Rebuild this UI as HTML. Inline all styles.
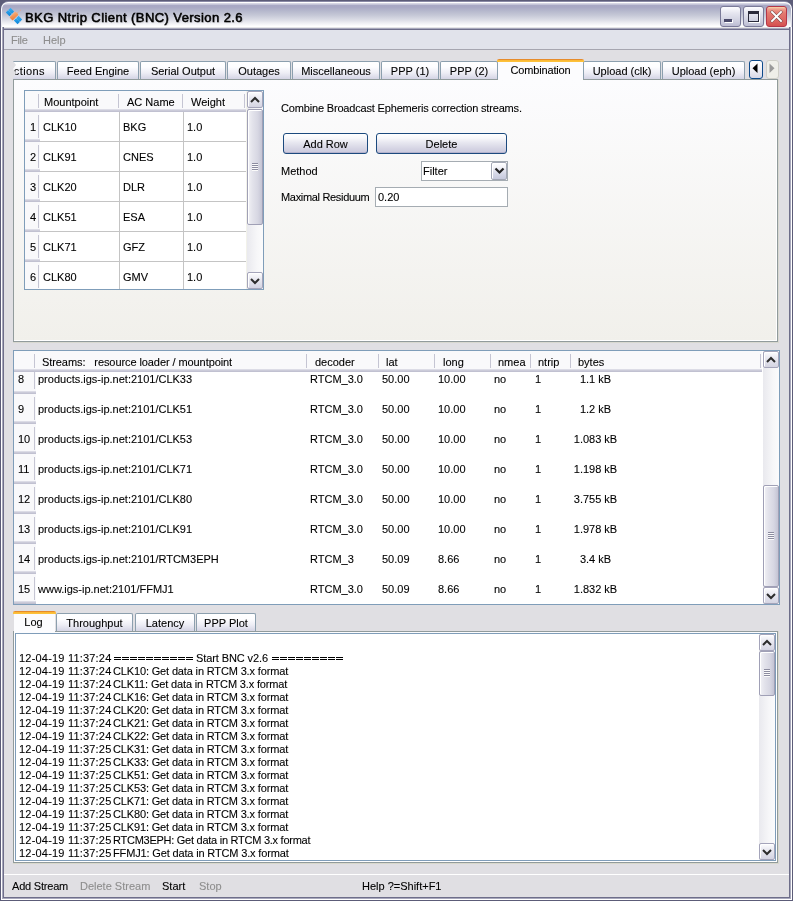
<!DOCTYPE html><html><head><meta charset="utf-8"><style>
*{margin:0;padding:0;box-sizing:border-box}
html,body{width:793px;height:901px;overflow:hidden;background:#6c6c88}
body{position:relative;font-family:"Liberation Sans", sans-serif;font-size:11px;color:#000}
.a{position:absolute}
.t{position:absolute;font-size:11px;line-height:13px;white-space:pre;color:#000;filter:grayscale(1);-webkit-text-stroke:0.1px currentColor}
.g{color:#8e8e8e}
.eq{letter-spacing:1.75px}
</style></head><body>
<div class="a" style="left:0;top:0;width:793px;height:901px">
<div class="a" style="left:0;top:0;width:793px;height:901px;background:#5c5c78"></div>
<div class="a" style="left:4px;top:30px;width:785px;height:867px;background:#e0dfe3"></div>
<div class="a" style="left:1px;top:1px;width:791px;height:40px;border-radius:8px 8px 0 0;background:#8a8aa6"></div>
<div class="a" style="left:1px;top:2px;width:791px;height:40px;border-radius:7px 7px 0 0;background:#ffffff"></div>
<div class="a" style="left:2px;top:3px;width:789px;height:27px;border-radius:6px 6px 0 0;background:linear-gradient(to bottom,#e0e0ea 0px,#c4c4d8 1.5px,#a9a9c5 2.5px,#a8a8c4 4px,#b2b4ca 7px,#c4c7d6 12px,#dcdde6 17px,#eeeef3 20px,#fbfbfc 22.5px,#ffffff 23px,#ffffff 24px,#e6e6e8 24px,#e6e6e8 25px,#a8a8bc 25px,#a8a8bc 26px,#6e6e8a 26px)"></div>
<div class="a" style="left:1px;top:9px;width:1px;height:20px;background:linear-gradient(to bottom,#fff,#e8e8f0)"></div>
<div class="a" style="left:791px;top:9px;width:1px;height:20px;background:linear-gradient(to bottom,#fff,#d0d0dc)"></div>
<div class="a" style="left:0;top:27px;width:4px;height:874px;background:linear-gradient(to right,#5c5c78 1px,#ffffff 1px,#ffffff 2px,#a8a8bc 2px,#a8a8bc 3px,#6e6e8a 3px)"></div>
<div class="a" style="left:789px;top:27px;width:4px;height:874px;background:linear-gradient(to right,#6e6e8a 1px,#a8a8bc 1px,#a8a8bc 2px,#ffffff 2px,#ffffff 3px,#5c5c78 3px)"></div>
<div class="a" style="left:0;top:897px;width:793px;height:4px;background:linear-gradient(to bottom,#6e6e8a 1px,#a8a8bc 1px,#a8a8bc 2px,#ffffff 2px,#ffffff 3px,#5c5c78 3px)"></div>
<div class="a" style="left:0;top:897px;width:1px;height:4px;background:#5c5c78"></div>
<div class="a" style="left:792px;top:897px;width:1px;height:4px;background:#5c5c78"></div>
<div class="a" style="left:1px;top:897px;width:1px;height:3px;background:#fff"></div>
<div class="a" style="left:791px;top:897px;width:1px;height:3px;background:#fff"></div>
<div class="a" style="left:2px;top:897px;width:1px;height:2px;background:#a8a8bc"></div>
<div class="a" style="left:790px;top:897px;width:1px;height:2px;background:#a8a8bc"></div>
<svg class="a" style="left:0;top:0" width="30" height="30" viewBox="0 0 30 30">
<defs><linearGradient id="bl" x1="0" y1="0" x2="1" y2="1"><stop offset="0" stop-color="#3fb0f4"/><stop offset="1" stop-color="#0a84d8"/></linearGradient>
<linearGradient id="or" x1="0" y1="0" x2="1" y2="1"><stop offset="0" stop-color="#f9b07a"/><stop offset="1" stop-color="#ec7a36"/></linearGradient></defs>
<line x1="15.5" y1="14.5" x2="20.8" y2="10" stroke="#f3a37a" stroke-width="1" stroke-dasharray="1 1"/>
<g transform="translate(14 16) rotate(45)">
<rect x="-8.3" y="-3.3" width="5.2" height="6.6" fill="url(#bl)"/>
<rect x="3.1" y="-3.3" width="5.2" height="6.6" fill="url(#bl)"/>
<line x1="-8.3" y1="0" x2="-3.1" y2="0" stroke="#9ad4f4" stroke-width="0.6" stroke-dasharray="1 1"/>
<line x1="3.1" y1="0" x2="8.3" y2="0" stroke="#9ad4f4" stroke-width="0.6" stroke-dasharray="1 1"/>
<rect x="-2.2" y="-4.2" width="4.4" height="8.4" rx="0.8" fill="url(#or)"/>
</g>
</svg>
<div class="a" style="left:25px;top:10px;font-weight:normal;font-size:13px;letter-spacing:0.42px;-webkit-text-stroke:0.55px #000;line-height:16px;white-space:pre;color:#000;filter:grayscale(1);text-shadow:1px 1px 1px rgba(0,0,0,.15)">BKG Ntrip Client (BNC) Version 2.6</div>
<div class="a" style="left:720px;top:6px;width:21px;height:21px;border:1px solid #7a7a98;border-radius:3px;background:linear-gradient(to bottom,#fdfdff 0px,#e6e6f0 6px,#cfd0e0 14px,#b4b4cc 21px)"><div class="a" style="left:3px;top:12px;width:8px;height:3px;background:#4a4a6a;box-shadow:1px 1px 0 #fff"></div></div>
<div class="a" style="left:743px;top:6px;width:21px;height:21px;border:1px solid #7a7a98;border-radius:3px;background:linear-gradient(to bottom,#fdfdff 0px,#e6e6f0 6px,#cfd0e0 14px,#b4b4cc 21px)"><div class="a" style="left:4px;top:4px;width:11px;height:11px;border:1px solid #2a2a3a;border-top-width:3px;box-shadow:1px 1px 0 #fff"></div></div>
<div class="a" style="left:766px;top:6px;width:21px;height:21px;border:1px solid #b43648;border-radius:3px;background:linear-gradient(to bottom,#f7d8a8 0px,#eea08e 2px,#e47a70 6px,#dc6460 14px,#d5504e 19px)"><svg class="a" style="left:2px;top:2px" width="15" height="15" viewBox="0 0 15 15"><path d="M3 3 L12 12 M12 3 L3 12" stroke="#3a1a1a" stroke-width="2.6" stroke-linecap="square"/><path d="M3 3 L12 12 M12 3 L3 12" stroke="#fff" stroke-width="2" stroke-linecap="square"/></svg></div>
<div class="a" style="left:4px;top:30px;width:785px;height:19px;background:#e1e3eb"></div>
<div class="a" style="left:4px;top:49px;width:785px;height:1px;background:#a6a6b0"></div>
<div class="t g" style="left:11px;top:34px;letter-spacing:-0.3px">File</div>
<div class="t g" style="left:43px;top:34px;">Help</div>
<div class="a" style="left:13px;top:79px;width:766px;height:264px;background:#d8d8d0"></div>
<div class="a" style="left:13px;top:79px;width:765px;height:263px;border:1px solid #919b9c;background:linear-gradient(to bottom,#fcfcfe,#f1f0eb);box-shadow:inset -1px -1px 0 #fff"></div>
<div class="a" style="left:13px;top:61px;width:43px;height:18px;border:1px solid #8c9fae;border-bottom:none;border-radius:2px 2px 0 0;background:linear-gradient(to bottom,#ffffff 0px,#fdfdff 5px,#ededf5 11px,#d0d0e2 18px);border-left:none;border-radius:0 2px 0 0;"></div>
<div class="t" style="left:14px;top:65px"></div>
<div class="a" style="left:14px;top:61px;width:41px;height:18px;overflow:hidden"><div class="t" style="right:10px;top:4px;letter-spacing:0.4px">Connections</div></div>
<div class="a" style="left:57px;top:61px;width:82px;height:18px;border:1px solid #8c9fae;border-bottom:none;border-radius:2px 2px 0 0;background:linear-gradient(to bottom,#ffffff 0px,#fdfdff 5px,#ededf5 11px,#d0d0e2 18px);"></div>
<div class="t" style="left:57px;top:65px;width:82px;text-align:center">Feed Engine</div>
<div class="a" style="left:140px;top:61px;width:86px;height:18px;border:1px solid #8c9fae;border-bottom:none;border-radius:2px 2px 0 0;background:linear-gradient(to bottom,#ffffff 0px,#fdfdff 5px,#ededf5 11px,#d0d0e2 18px);"></div>
<div class="t" style="left:140px;top:65px;width:86px;text-align:center">Serial Output</div>
<div class="a" style="left:227px;top:61px;width:64px;height:18px;border:1px solid #8c9fae;border-bottom:none;border-radius:2px 2px 0 0;background:linear-gradient(to bottom,#ffffff 0px,#fdfdff 5px,#ededf5 11px,#d0d0e2 18px);"></div>
<div class="t" style="left:227px;top:65px;width:64px;text-align:center">Outages</div>
<div class="a" style="left:292px;top:61px;width:88px;height:18px;border:1px solid #8c9fae;border-bottom:none;border-radius:2px 2px 0 0;background:linear-gradient(to bottom,#ffffff 0px,#fdfdff 5px,#ededf5 11px,#d0d0e2 18px);"></div>
<div class="t" style="left:292px;top:65px;width:88px;text-align:center">Miscellaneous</div>
<div class="a" style="left:381px;top:61px;width:58px;height:18px;border:1px solid #8c9fae;border-bottom:none;border-radius:2px 2px 0 0;background:linear-gradient(to bottom,#ffffff 0px,#fdfdff 5px,#ededf5 11px,#d0d0e2 18px);"></div>
<div class="t" style="left:381px;top:65px;width:58px;text-align:center">PPP (1)</div>
<div class="a" style="left:440px;top:61px;width:58px;height:18px;border:1px solid #8c9fae;border-bottom:none;border-radius:2px 2px 0 0;background:linear-gradient(to bottom,#ffffff 0px,#fdfdff 5px,#ededf5 11px,#d0d0e2 18px);"></div>
<div class="t" style="left:440px;top:65px;width:58px;text-align:center">PPP (2)</div>
<div class="a" style="left:583px;top:61px;width:78px;height:18px;border:1px solid #8c9fae;border-bottom:none;border-radius:2px 2px 0 0;background:linear-gradient(to bottom,#ffffff 0px,#fdfdff 5px,#ededf5 11px,#d0d0e2 18px);"></div>
<div class="t" style="left:583px;top:65px;width:78px;text-align:center">Upload (clk)</div>
<div class="a" style="left:662px;top:61px;width:83px;height:18px;border:1px solid #8c9fae;border-bottom:none;border-radius:2px 2px 0 0;background:linear-gradient(to bottom,#ffffff 0px,#fdfdff 5px,#ededf5 11px,#d0d0e2 18px);"></div>
<div class="t" style="left:662px;top:65px;width:83px;text-align:center">Upload (eph)</div>
<div class="a" style="left:498px;top:59px;width:85px;height:21px;background:#fcfcfe"></div>
<div class="a" style="left:497px;top:59px;width:87px;height:3px;border-radius:2px 2px 0 0;background:linear-gradient(to bottom,#e68b2c 0px,#e68b2c 1px,#fbb632 1px,#fcc53e 3px)"></div>
<div class="t" style="left:497px;top:64px;width:87px;text-align:center;letter-spacing:-0.15px">Combination</div>
<svg class="a" style="left:12px;top:61px" width="6" height="19" viewBox="0 0 6 19"><path d="M0 0 L1 0 L4 4 L1 8 L4 12 L1 17 L1 19 L0 19 Z" fill="#e0dfe3"/></svg>
<div class="a" style="left:749px;top:60px;width:14px;height:19px;border:1px solid #0d4a8a;border-radius:3px;background:linear-gradient(to bottom,#ffffff,#f0f0f6 50%,#d8d8e6)"><svg class="a" style="left:1px;top:2px" width="8" height="11"><path d="M6.5 0.5 L6.5 10 L1.5 5.25 Z" fill="#000"/></svg></div>
<div class="a" style="left:766px;top:60px;width:13px;height:19px;border:1px solid #cfcfc8;border-radius:3px;background:#efefe9"><svg class="a" style="left:1px;top:2px" width="8" height="11"><path d="M1.5 0.5 L1.5 10 L6.5 5.25 Z" fill="#9a9a9a"/></svg></div>
<div class="a" style="left:24px;top:90px;width:240px;height:200px;border:1px solid #7f9db9;background:#fff"></div>
<div class="a" style="left:25px;top:91px;width:221px;height:18px;background:#f9f9fb"></div>
<div class="a" style="left:25px;top:109px;width:221px;height:3px;background:linear-gradient(to bottom,#dcdce6 0px,#dcdce6 1px,#cbcbd9 1px,#cbcbd9 2px,#c1c1d1 2px)"></div>
<div class="a" style="left:38px;top:94px;width:1px;height:14px;background:#c5c5d3"></div>
<div class="a" style="left:118px;top:94px;width:1px;height:14px;background:#c5c5d3"></div>
<div class="a" style="left:182px;top:94px;width:1px;height:14px;background:#c5c5d3"></div>
<div class="a" style="left:244px;top:94px;width:1px;height:14px;background:#c5c5d3"></div>
<div class="t" style="left:44px;top:96px;">Mountpoint</div>
<div class="t" style="left:127px;top:96px;">AC Name</div>
<div class="t" style="left:191px;top:96px;">Weight</div>
<div class="a" style="left:25px;top:112px;width:15px;height:27px;background:#f9f9fb"></div>
<div class="a" style="left:25px;top:139px;width:15px;height:3px;background:linear-gradient(to bottom,#dcdce6 0px,#dcdce6 1px,#cbcbd9 1px,#cbcbd9 2px,#c1c1d1 2px)"></div>
<div class="a" style="left:38px;top:115px;width:1px;height:23px;background:#c5c5d3"></div>
<div class="t" style="left:30px;top:121px;">1</div>
<div class="a" style="left:40px;top:141px;width:206px;height:1px;background:#c4c4c4"></div>
<div class="t" style="left:43px;top:121px;">CLK10</div>
<div class="t" style="left:123px;top:121px;">BKG</div>
<div class="t" style="left:187px;top:121px;">1.0</div>
<div class="a" style="left:25px;top:142px;width:15px;height:27px;background:#f9f9fb"></div>
<div class="a" style="left:25px;top:169px;width:15px;height:3px;background:linear-gradient(to bottom,#dcdce6 0px,#dcdce6 1px,#cbcbd9 1px,#cbcbd9 2px,#c1c1d1 2px)"></div>
<div class="a" style="left:38px;top:145px;width:1px;height:23px;background:#c5c5d3"></div>
<div class="t" style="left:30px;top:151px;">2</div>
<div class="a" style="left:40px;top:171px;width:206px;height:1px;background:#c4c4c4"></div>
<div class="t" style="left:43px;top:151px;">CLK91</div>
<div class="t" style="left:123px;top:151px;">CNES</div>
<div class="t" style="left:187px;top:151px;">1.0</div>
<div class="a" style="left:25px;top:172px;width:15px;height:27px;background:#f9f9fb"></div>
<div class="a" style="left:25px;top:199px;width:15px;height:3px;background:linear-gradient(to bottom,#dcdce6 0px,#dcdce6 1px,#cbcbd9 1px,#cbcbd9 2px,#c1c1d1 2px)"></div>
<div class="a" style="left:38px;top:175px;width:1px;height:23px;background:#c5c5d3"></div>
<div class="t" style="left:30px;top:181px;">3</div>
<div class="a" style="left:40px;top:201px;width:206px;height:1px;background:#c4c4c4"></div>
<div class="t" style="left:43px;top:181px;">CLK20</div>
<div class="t" style="left:123px;top:181px;">DLR</div>
<div class="t" style="left:187px;top:181px;">1.0</div>
<div class="a" style="left:25px;top:202px;width:15px;height:27px;background:#f9f9fb"></div>
<div class="a" style="left:25px;top:229px;width:15px;height:3px;background:linear-gradient(to bottom,#dcdce6 0px,#dcdce6 1px,#cbcbd9 1px,#cbcbd9 2px,#c1c1d1 2px)"></div>
<div class="a" style="left:38px;top:205px;width:1px;height:23px;background:#c5c5d3"></div>
<div class="t" style="left:30px;top:211px;">4</div>
<div class="a" style="left:40px;top:231px;width:206px;height:1px;background:#c4c4c4"></div>
<div class="t" style="left:43px;top:211px;">CLK51</div>
<div class="t" style="left:123px;top:211px;">ESA</div>
<div class="t" style="left:187px;top:211px;">1.0</div>
<div class="a" style="left:25px;top:232px;width:15px;height:27px;background:#f9f9fb"></div>
<div class="a" style="left:25px;top:259px;width:15px;height:3px;background:linear-gradient(to bottom,#dcdce6 0px,#dcdce6 1px,#cbcbd9 1px,#cbcbd9 2px,#c1c1d1 2px)"></div>
<div class="a" style="left:38px;top:235px;width:1px;height:23px;background:#c5c5d3"></div>
<div class="t" style="left:30px;top:241px;">5</div>
<div class="a" style="left:40px;top:261px;width:206px;height:1px;background:#c4c4c4"></div>
<div class="t" style="left:43px;top:241px;">CLK71</div>
<div class="t" style="left:123px;top:241px;">GFZ</div>
<div class="t" style="left:187px;top:241px;">1.0</div>
<div class="a" style="left:25px;top:262px;width:15px;height:27px;background:#f9f9fb"></div>
<div class="a" style="left:38px;top:265px;width:1px;height:23px;background:#c5c5d3"></div>
<div class="t" style="left:30px;top:271px;">6</div>
<div class="t" style="left:43px;top:271px;">CLK80</div>
<div class="t" style="left:123px;top:271px;">GMV</div>
<div class="t" style="left:187px;top:271px;">1.0</div>
<div class="a" style="left:119px;top:112px;width:1px;height:177px;background:#c4c4c4"></div>
<div class="a" style="left:183px;top:112px;width:1px;height:177px;background:#c4c4c4"></div>
<div class="a" style="left:246px;top:91px;width:1px;height:198px;background:#f2f2ea"></div>
<div class="a" style="left:247px;top:91px;width:16px;height:198px;background:linear-gradient(to right,#e9e9ee,#f6f6f8 60%,#fbfbfc)"></div>
<div class="a" style="left:247px;top:91px;width:16px;height:17px;border:1px solid #a4a4ba;border-radius:2px;background:linear-gradient(to bottom,#fdfdfe 0px,#ececf3 5px,#d4d4e2 15px,#c6c6d8 16px);box-shadow:inset 1px 1px 0 #fff"><svg class="a" style="left:2px;top:4px" width="10" height="7" viewBox="0 0 10 7"><path d="M1 6 L5 2 L9 6" stroke="#2c2c2c" stroke-width="2" fill="none"/></svg></div>
<div class="a" style="left:247px;top:272px;width:16px;height:17px;border:1px solid #a4a4ba;border-radius:2px;background:linear-gradient(to bottom,#fdfdfe 0px,#ececf3 5px,#d4d4e2 15px,#c6c6d8 16px);box-shadow:inset 1px 1px 0 #fff"><svg class="a" style="left:2px;top:5px" width="10" height="7" viewBox="0 0 10 7"><path d="M1 1 L5 5 L9 1" stroke="#2c2c2c" stroke-width="2" fill="none"/></svg></div>
<div class="a" style="left:247px;top:109px;width:16px;height:116px;border:1px solid #a0a0b6;border-radius:2px;background:linear-gradient(to right,#f2f2f6 0px,#e4e4ec 4px,#d6d6e2 10px,#c4c4d4 14px);box-shadow:inset 1px 1px 0 #fff"></div>
<div class="a" style="left:252px;top:163px;width:6px;height:1px;background:#8c8ca0;box-shadow:0 1px 0 #fafafa"></div>
<div class="a" style="left:252px;top:165px;width:6px;height:1px;background:#8c8ca0;box-shadow:0 1px 0 #fafafa"></div>
<div class="a" style="left:252px;top:167px;width:6px;height:1px;background:#8c8ca0;box-shadow:0 1px 0 #fafafa"></div>
<div class="a" style="left:252px;top:169px;width:6px;height:1px;background:#8c8ca0;box-shadow:0 1px 0 #fafafa"></div>
<div class="t" style="left:281px;top:102px;letter-spacing:-0.17px">Combine Broadcast Ephemeris correction streams.</div>
<div class="a" style="left:283px;top:133px;width:85px;height:21px;border:1px solid #1c4a7e;border-radius:3px;background:linear-gradient(to bottom,#ffffff 0px,#f8f8fb 4px,#e6e6ef 9px,#d4d3e3 15px,#c9c7dc 20px);box-shadow:inset 0 -1px 0 #b4b2cc"></div>
<div class="t" style="left:283px;top:138px;width:85px;text-align:center">Add Row</div>
<div class="a" style="left:376px;top:133px;width:131px;height:21px;border:1px solid #1c4a7e;border-radius:3px;background:linear-gradient(to bottom,#ffffff 0px,#f8f8fb 4px,#e6e6ef 9px,#d4d3e3 15px,#c9c7dc 20px);box-shadow:inset 0 -1px 0 #b4b2cc"></div>
<div class="t" style="left:376px;top:138px;width:131px;text-align:center">Delete</div>
<div class="t" style="left:281px;top:165px;">Method</div>
<div class="a" style="left:421px;top:161px;width:87px;height:20px;border:1px solid #a5acb2;background:#fff"></div>
<div class="t" style="left:423px;top:165px;">Filter</div>
<div class="a" style="left:491px;top:162px;width:16px;height:18px;border:1px solid #a3a7b4;border-radius:2px;background:linear-gradient(to bottom,#ffffff 0px,#f4f4f8 4px,#d8dae8 10px,#c6c9dc 16px);box-shadow:inset 1px 1px 0 #fff"><svg class="a" style="left:2px;top:4px" width="11" height="8" viewBox="0 0 11 8"><path d="M1.5 1.5 L5.5 5.5 L9.5 1.5" stroke="#222" stroke-width="2.2" fill="none"/></svg></div>
<div class="t" style="left:281px;top:191px;letter-spacing:-0.32px">Maximal Residuum</div>
<div class="a" style="left:375px;top:187px;width:133px;height:20px;border:1px solid #a5acb2;background:#fff"></div>
<div class="t" style="left:378px;top:191px;">0.20</div>
<div class="a" style="left:13px;top:350px;width:767px;height:255px;border:1px solid #7f9db9;background:#fff"></div>
<div class="a" style="left:14px;top:351px;width:748px;height:18px;background:#f9f9fb"></div>
<div class="a" style="left:14px;top:369px;width:748px;height:3px;background:linear-gradient(to bottom,#dcdce6 0px,#dcdce6 1px,#cbcbd9 1px,#cbcbd9 2px,#c1c1d1 2px)"></div>
<div class="a" style="left:34px;top:354px;width:1px;height:14px;background:#c5c5d3"></div>
<div class="a" style="left:306px;top:354px;width:1px;height:14px;background:#c5c5d3"></div>
<div class="a" style="left:378px;top:354px;width:1px;height:14px;background:#c5c5d3"></div>
<div class="a" style="left:434px;top:354px;width:1px;height:14px;background:#c5c5d3"></div>
<div class="a" style="left:490px;top:354px;width:1px;height:14px;background:#c5c5d3"></div>
<div class="a" style="left:530px;top:354px;width:1px;height:14px;background:#c5c5d3"></div>
<div class="a" style="left:570px;top:354px;width:1px;height:14px;background:#c5c5d3"></div>
<div class="a" style="left:760px;top:354px;width:1px;height:14px;background:#c5c5d3"></div>
<div class="t" style="left:42px;top:356px;letter-spacing:-0.08px">Streams:   resource loader / mountpoint</div>
<div class="t" style="left:315px;top:356px;">decoder</div>
<div class="t" style="left:386px;top:356px;">lat</div>
<div class="t" style="left:443px;top:356px;">long</div>
<div class="t" style="left:498px;top:356px;">nmea</div>
<div class="t" style="left:538px;top:356px;">ntrip</div>
<div class="t" style="left:578px;top:356px;">bytes</div>
<div class="a" style="left:14px;top:372px;width:22px;height:19px;background:#f9f9fb"></div>
<div class="a" style="left:14px;top:391px;width:22px;height:3px;background:linear-gradient(to bottom,#dcdce6 0px,#dcdce6 1px,#cbcbd9 1px,#cbcbd9 2px,#c1c1d1 2px)"></div>
<div class="a" style="left:34px;top:372px;width:1px;height:17px;background:#c5c5d3"></div>
<div class="t" style="left:18px;top:373px;">8</div>
<div class="t" style="left:38px;top:373px;">products.igs-ip.net:2101/CLK33</div>
<div class="t" style="left:310px;top:373px;">RTCM_3.0</div>
<div class="t" style="left:382px;top:373px;">50.00</div>
<div class="t" style="left:438px;top:373px;">10.00</div>
<div class="t" style="left:494px;top:373px;">no</div>
<div class="t" style="left:535px;top:373px;">1</div>
<div class="t" style="left:570px;top:373px;width:51px;text-align:center">1.1 kB</div>
<div class="a" style="left:14px;top:394px;width:22px;height:27px;background:#f9f9fb"></div>
<div class="a" style="left:14px;top:421px;width:22px;height:3px;background:linear-gradient(to bottom,#dcdce6 0px,#dcdce6 1px,#cbcbd9 1px,#cbcbd9 2px,#c1c1d1 2px)"></div>
<div class="a" style="left:34px;top:397px;width:1px;height:23px;background:#c5c5d3"></div>
<div class="t" style="left:18px;top:403px;">9</div>
<div class="t" style="left:38px;top:403px;">products.igs-ip.net:2101/CLK51</div>
<div class="t" style="left:310px;top:403px;">RTCM_3.0</div>
<div class="t" style="left:382px;top:403px;">50.00</div>
<div class="t" style="left:438px;top:403px;">10.00</div>
<div class="t" style="left:494px;top:403px;">no</div>
<div class="t" style="left:535px;top:403px;">1</div>
<div class="t" style="left:570px;top:403px;width:51px;text-align:center">1.2 kB</div>
<div class="a" style="left:14px;top:424px;width:22px;height:27px;background:#f9f9fb"></div>
<div class="a" style="left:14px;top:451px;width:22px;height:3px;background:linear-gradient(to bottom,#dcdce6 0px,#dcdce6 1px,#cbcbd9 1px,#cbcbd9 2px,#c1c1d1 2px)"></div>
<div class="a" style="left:34px;top:427px;width:1px;height:23px;background:#c5c5d3"></div>
<div class="t" style="left:18px;top:433px;">10</div>
<div class="t" style="left:38px;top:433px;">products.igs-ip.net:2101/CLK53</div>
<div class="t" style="left:310px;top:433px;">RTCM_3.0</div>
<div class="t" style="left:382px;top:433px;">50.00</div>
<div class="t" style="left:438px;top:433px;">10.00</div>
<div class="t" style="left:494px;top:433px;">no</div>
<div class="t" style="left:535px;top:433px;">1</div>
<div class="t" style="left:570px;top:433px;width:51px;text-align:center">1.083 kB</div>
<div class="a" style="left:14px;top:454px;width:22px;height:27px;background:#f9f9fb"></div>
<div class="a" style="left:14px;top:481px;width:22px;height:3px;background:linear-gradient(to bottom,#dcdce6 0px,#dcdce6 1px,#cbcbd9 1px,#cbcbd9 2px,#c1c1d1 2px)"></div>
<div class="a" style="left:34px;top:457px;width:1px;height:23px;background:#c5c5d3"></div>
<div class="t" style="left:18px;top:463px;">11</div>
<div class="t" style="left:38px;top:463px;">products.igs-ip.net:2101/CLK71</div>
<div class="t" style="left:310px;top:463px;">RTCM_3.0</div>
<div class="t" style="left:382px;top:463px;">50.00</div>
<div class="t" style="left:438px;top:463px;">10.00</div>
<div class="t" style="left:494px;top:463px;">no</div>
<div class="t" style="left:535px;top:463px;">1</div>
<div class="t" style="left:570px;top:463px;width:51px;text-align:center">1.198 kB</div>
<div class="a" style="left:14px;top:484px;width:22px;height:27px;background:#f9f9fb"></div>
<div class="a" style="left:14px;top:511px;width:22px;height:3px;background:linear-gradient(to bottom,#dcdce6 0px,#dcdce6 1px,#cbcbd9 1px,#cbcbd9 2px,#c1c1d1 2px)"></div>
<div class="a" style="left:34px;top:487px;width:1px;height:23px;background:#c5c5d3"></div>
<div class="t" style="left:18px;top:493px;">12</div>
<div class="t" style="left:38px;top:493px;">products.igs-ip.net:2101/CLK80</div>
<div class="t" style="left:310px;top:493px;">RTCM_3.0</div>
<div class="t" style="left:382px;top:493px;">50.00</div>
<div class="t" style="left:438px;top:493px;">10.00</div>
<div class="t" style="left:494px;top:493px;">no</div>
<div class="t" style="left:535px;top:493px;">1</div>
<div class="t" style="left:570px;top:493px;width:51px;text-align:center">3.755 kB</div>
<div class="a" style="left:14px;top:514px;width:22px;height:27px;background:#f9f9fb"></div>
<div class="a" style="left:14px;top:541px;width:22px;height:3px;background:linear-gradient(to bottom,#dcdce6 0px,#dcdce6 1px,#cbcbd9 1px,#cbcbd9 2px,#c1c1d1 2px)"></div>
<div class="a" style="left:34px;top:517px;width:1px;height:23px;background:#c5c5d3"></div>
<div class="t" style="left:18px;top:523px;">13</div>
<div class="t" style="left:38px;top:523px;">products.igs-ip.net:2101/CLK91</div>
<div class="t" style="left:310px;top:523px;">RTCM_3.0</div>
<div class="t" style="left:382px;top:523px;">50.00</div>
<div class="t" style="left:438px;top:523px;">10.00</div>
<div class="t" style="left:494px;top:523px;">no</div>
<div class="t" style="left:535px;top:523px;">1</div>
<div class="t" style="left:570px;top:523px;width:51px;text-align:center">1.978 kB</div>
<div class="a" style="left:14px;top:544px;width:22px;height:27px;background:#f9f9fb"></div>
<div class="a" style="left:14px;top:571px;width:22px;height:3px;background:linear-gradient(to bottom,#dcdce6 0px,#dcdce6 1px,#cbcbd9 1px,#cbcbd9 2px,#c1c1d1 2px)"></div>
<div class="a" style="left:34px;top:547px;width:1px;height:23px;background:#c5c5d3"></div>
<div class="t" style="left:18px;top:553px;">14</div>
<div class="t" style="left:38px;top:553px;">products.igs-ip.net:2101/RTCM3EPH</div>
<div class="t" style="left:310px;top:553px;">RTCM_3</div>
<div class="t" style="left:382px;top:553px;">50.09</div>
<div class="t" style="left:438px;top:553px;">8.66</div>
<div class="t" style="left:494px;top:553px;">no</div>
<div class="t" style="left:535px;top:553px;">1</div>
<div class="t" style="left:570px;top:553px;width:51px;text-align:center">3.4 kB</div>
<div class="a" style="left:14px;top:574px;width:22px;height:27px;background:#f9f9fb"></div>
<div class="a" style="left:14px;top:601px;width:22px;height:3px;background:linear-gradient(to bottom,#dcdce6 0px,#dcdce6 1px,#cbcbd9 1px,#cbcbd9 2px,#c1c1d1 2px)"></div>
<div class="a" style="left:34px;top:577px;width:1px;height:23px;background:#c5c5d3"></div>
<div class="t" style="left:18px;top:583px;">15</div>
<div class="t" style="left:38px;top:583px;">www.igs-ip.net:2101/FFMJ1</div>
<div class="t" style="left:310px;top:583px;">RTCM_3.0</div>
<div class="t" style="left:382px;top:583px;">50.09</div>
<div class="t" style="left:438px;top:583px;">8.66</div>
<div class="t" style="left:494px;top:583px;">no</div>
<div class="t" style="left:535px;top:583px;">1</div>
<div class="t" style="left:570px;top:583px;width:51px;text-align:center">1.832 kB</div>
<div class="a" style="left:763px;top:351px;width:16px;height:253px;background:linear-gradient(to right,#e9e9ee,#f6f6f8 60%,#fbfbfc)"></div>
<div class="a" style="left:763px;top:351px;width:16px;height:17px;border:1px solid #a4a4ba;border-radius:2px;background:linear-gradient(to bottom,#fdfdfe 0px,#ececf3 5px,#d4d4e2 15px,#c6c6d8 16px);box-shadow:inset 1px 1px 0 #fff"><svg class="a" style="left:2px;top:4px" width="10" height="7" viewBox="0 0 10 7"><path d="M1 6 L5 2 L9 6" stroke="#2c2c2c" stroke-width="2" fill="none"/></svg></div>
<div class="a" style="left:763px;top:587px;width:16px;height:17px;border:1px solid #a4a4ba;border-radius:2px;background:linear-gradient(to bottom,#fdfdfe 0px,#ececf3 5px,#d4d4e2 15px,#c6c6d8 16px);box-shadow:inset 1px 1px 0 #fff"><svg class="a" style="left:2px;top:5px" width="10" height="7" viewBox="0 0 10 7"><path d="M1 1 L5 5 L9 1" stroke="#2c2c2c" stroke-width="2" fill="none"/></svg></div>
<div class="a" style="left:763px;top:485px;width:16px;height:102px;border:1px solid #a0a0b6;border-radius:2px;background:linear-gradient(to right,#f2f2f6 0px,#e4e4ec 4px,#d6d6e2 10px,#c4c4d4 14px);box-shadow:inset 1px 1px 0 #fff"></div>
<div class="a" style="left:768px;top:532px;width:6px;height:1px;background:#8c8ca0;box-shadow:0 1px 0 #fafafa"></div>
<div class="a" style="left:768px;top:534px;width:6px;height:1px;background:#8c8ca0;box-shadow:0 1px 0 #fafafa"></div>
<div class="a" style="left:768px;top:536px;width:6px;height:1px;background:#8c8ca0;box-shadow:0 1px 0 #fafafa"></div>
<div class="a" style="left:768px;top:538px;width:6px;height:1px;background:#8c8ca0;box-shadow:0 1px 0 #fafafa"></div>
<div class="a" style="left:13px;top:631px;width:766px;height:233px;background:#d8d8cc"></div>
<div class="a" style="left:13px;top:631px;width:765px;height:232px;border:1px solid #919b9c;background:#fcfcfe;box-shadow:inset -1px -1px 0 #fff"></div>
<div class="a" style="left:56px;top:613px;width:77px;height:18px;border:1px solid #8c9fae;border-bottom:none;border-radius:2px 2px 0 0;background:linear-gradient(to bottom,#ffffff 0px,#fdfdff 5px,#ededf5 11px,#d0d0e2 18px);"></div>
<div class="t" style="left:56px;top:617px;width:77px;text-align:center">Throughput</div>
<div class="a" style="left:135px;top:613px;width:60px;height:18px;border:1px solid #8c9fae;border-bottom:none;border-radius:2px 2px 0 0;background:linear-gradient(to bottom,#ffffff 0px,#fdfdff 5px,#ededf5 11px,#d0d0e2 18px);"></div>
<div class="t" style="left:135px;top:617px;width:60px;text-align:center">Latency</div>
<div class="a" style="left:196px;top:613px;width:60px;height:18px;border:1px solid #8c9fae;border-bottom:none;border-radius:2px 2px 0 0;background:linear-gradient(to bottom,#ffffff 0px,#fdfdff 5px,#ededf5 11px,#d0d0e2 18px);"></div>
<div class="t" style="left:196px;top:617px;width:60px;text-align:center">PPP Plot</div>
<div class="a" style="left:14px;top:611px;width:41px;height:21px;background:#fcfcfe"></div>
<div class="a" style="left:13px;top:611px;width:43px;height:3px;border-radius:2px 2px 0 0;background:linear-gradient(to bottom,#e68b2c 0px,#e68b2c 1px,#fbb632 1px,#fcc53e 3px)"></div>
<div class="t" style="left:12px;top:616px;width:43px;text-align:center;letter-spacing:0px">Log</div>
<div class="a" style="left:15px;top:633px;width:761px;height:228px;border:1px solid #7f9db9;background:#fff"></div>
<div class="t" style="left:19px;top:652px;letter-spacing:0.2px">12-04-19 11:37:24</div>
<div class="a" style="left:114px;top:657px;width:79px;height:1px;background:repeating-linear-gradient(to right,#000 0px,#000 7px,transparent 7px,transparent 8px)"></div>
<div class="a" style="left:114px;top:659px;width:79px;height:1px;background:repeating-linear-gradient(to right,#000 0px,#000 7px,transparent 7px,transparent 8px)"></div>
<div class="a" style="left:272px;top:657px;width:71px;height:1px;background:repeating-linear-gradient(to right,#000 0px,#000 7px,transparent 7px,transparent 8px)"></div>
<div class="a" style="left:272px;top:659px;width:71px;height:1px;background:repeating-linear-gradient(to right,#000 0px,#000 7px,transparent 7px,transparent 8px)"></div>
<div class="t" style="left:196px;top:652px;letter-spacing:-0.1px">Start BNC v2.6</div>
<div class="t" style="left:19px;top:665px;letter-spacing:0.2px">12-04-19 11:37:24</div>
<div class="t" style="left:113px;top:665px;letter-spacing:-0.15px">CLK10: Get data in RTCM 3.x format</div>
<div class="t" style="left:19px;top:678px;letter-spacing:0.2px">12-04-19 11:37:24</div>
<div class="t" style="left:113px;top:678px;letter-spacing:-0.15px">CLK11: Get data in RTCM 3.x format</div>
<div class="t" style="left:19px;top:691px;letter-spacing:0.2px">12-04-19 11:37:24</div>
<div class="t" style="left:113px;top:691px;letter-spacing:-0.15px">CLK16: Get data in RTCM 3.x format</div>
<div class="t" style="left:19px;top:704px;letter-spacing:0.2px">12-04-19 11:37:24</div>
<div class="t" style="left:113px;top:704px;letter-spacing:-0.15px">CLK20: Get data in RTCM 3.x format</div>
<div class="t" style="left:19px;top:717px;letter-spacing:0.2px">12-04-19 11:37:24</div>
<div class="t" style="left:113px;top:717px;letter-spacing:-0.15px">CLK21: Get data in RTCM 3.x format</div>
<div class="t" style="left:19px;top:730px;letter-spacing:0.2px">12-04-19 11:37:24</div>
<div class="t" style="left:113px;top:730px;letter-spacing:-0.15px">CLK22: Get data in RTCM 3.x format</div>
<div class="t" style="left:19px;top:743px;letter-spacing:0.2px">12-04-19 11:37:25</div>
<div class="t" style="left:113px;top:743px;letter-spacing:-0.15px">CLK31: Get data in RTCM 3.x format</div>
<div class="t" style="left:19px;top:756px;letter-spacing:0.2px">12-04-19 11:37:25</div>
<div class="t" style="left:113px;top:756px;letter-spacing:-0.15px">CLK33: Get data in RTCM 3.x format</div>
<div class="t" style="left:19px;top:769px;letter-spacing:0.2px">12-04-19 11:37:25</div>
<div class="t" style="left:113px;top:769px;letter-spacing:-0.15px">CLK51: Get data in RTCM 3.x format</div>
<div class="t" style="left:19px;top:782px;letter-spacing:0.2px">12-04-19 11:37:25</div>
<div class="t" style="left:113px;top:782px;letter-spacing:-0.15px">CLK53: Get data in RTCM 3.x format</div>
<div class="t" style="left:19px;top:795px;letter-spacing:0.2px">12-04-19 11:37:25</div>
<div class="t" style="left:113px;top:795px;letter-spacing:-0.15px">CLK71: Get data in RTCM 3.x format</div>
<div class="t" style="left:19px;top:808px;letter-spacing:0.2px">12-04-19 11:37:25</div>
<div class="t" style="left:113px;top:808px;letter-spacing:-0.15px">CLK80: Get data in RTCM 3.x format</div>
<div class="t" style="left:19px;top:821px;letter-spacing:0.2px">12-04-19 11:37:25</div>
<div class="t" style="left:113px;top:821px;letter-spacing:-0.15px">CLK91: Get data in RTCM 3.x format</div>
<div class="t" style="left:19px;top:834px;letter-spacing:0.2px">12-04-19 11:37:25</div>
<div class="t" style="left:113px;top:834px;letter-spacing:-0.26px">RTCM3EPH: Get data in RTCM 3.x format</div>
<div class="t" style="left:19px;top:847px;letter-spacing:0.2px">12-04-19 11:37:25</div>
<div class="t" style="left:113px;top:847px;letter-spacing:-0.15px">FFMJ1: Get data in RTCM 3.x format</div>
<div class="a" style="left:759px;top:634px;width:16px;height:226px;background:linear-gradient(to right,#e9e9ee,#f6f6f8 60%,#fbfbfc)"></div>
<div class="a" style="left:759px;top:634px;width:16px;height:17px;border:1px solid #a4a4ba;border-radius:2px;background:linear-gradient(to bottom,#fdfdfe 0px,#ececf3 5px,#d4d4e2 15px,#c6c6d8 16px);box-shadow:inset 1px 1px 0 #fff"><svg class="a" style="left:2px;top:4px" width="10" height="7" viewBox="0 0 10 7"><path d="M1 6 L5 2 L9 6" stroke="#2c2c2c" stroke-width="2" fill="none"/></svg></div>
<div class="a" style="left:759px;top:843px;width:16px;height:17px;border:1px solid #a4a4ba;border-radius:2px;background:linear-gradient(to bottom,#fdfdfe 0px,#ececf3 5px,#d4d4e2 15px,#c6c6d8 16px);box-shadow:inset 1px 1px 0 #fff"><svg class="a" style="left:2px;top:5px" width="10" height="7" viewBox="0 0 10 7"><path d="M1 1 L5 5 L9 1" stroke="#2c2c2c" stroke-width="2" fill="none"/></svg></div>
<div class="a" style="left:759px;top:651px;width:16px;height:45px;border:1px solid #a0a0b6;border-radius:2px;background:linear-gradient(to right,#f2f2f6 0px,#e4e4ec 4px,#d6d6e2 10px,#c4c4d4 14px);box-shadow:inset 1px 1px 0 #fff"></div>
<div class="a" style="left:764px;top:669px;width:6px;height:1px;background:#8c8ca0;box-shadow:0 1px 0 #fafafa"></div>
<div class="a" style="left:764px;top:671px;width:6px;height:1px;background:#8c8ca0;box-shadow:0 1px 0 #fafafa"></div>
<div class="a" style="left:764px;top:673px;width:6px;height:1px;background:#8c8ca0;box-shadow:0 1px 0 #fafafa"></div>
<div class="a" style="left:764px;top:675px;width:6px;height:1px;background:#8c8ca0;box-shadow:0 1px 0 #fafafa"></div>
<div class="a" style="left:4px;top:874px;width:785px;height:1px;background:#ffffff"></div>
<div class="t" style="left:12px;top:880px;letter-spacing:-0.2px">Add Stream</div>
<div class="t g" style="left:80px;top:880px;">Delete Stream</div>
<div class="t" style="left:162px;top:880px;">Start</div>
<div class="t g" style="left:199px;top:880px;">Stop</div>
<div class="t" style="left:362px;top:880px;">Help ?=Shift+F1</div>
</div></body></html>
